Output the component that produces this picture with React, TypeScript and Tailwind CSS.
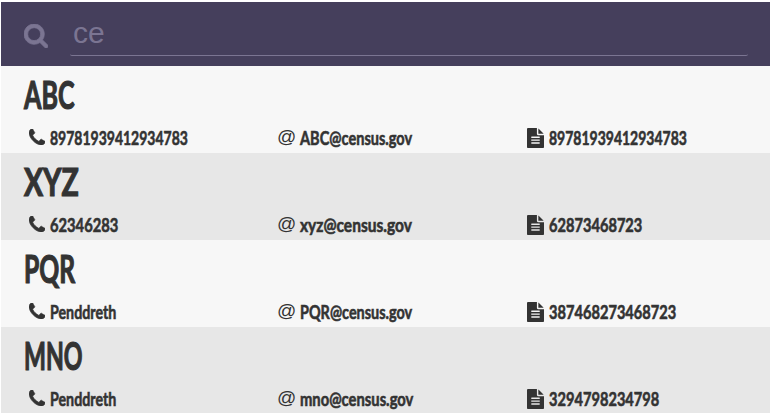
const hand =
  "font-['Lato',sans-serif] font-bold text-[#333333] inline-block origin-left whitespace-nowrap";

type Field = { text: string; scale: string };
type Contact = { name: Field; phone: Field; email: Field; doc: Field };

const contacts: Contact[] = [
  {
    name: { text: "ABC", scale: "scale-x-[0.66]" },
    phone: { text: "89781939412934783", scale: "scale-x-[0.736]" },
    email: { text: "ABC@census.gov", scale: "scale-x-[0.765]" },
    doc: { text: "89781939412934783", scale: "scale-x-[0.736]" },
  },
  {
    name: { text: "XYZ", scale: "scale-x-[0.75]" },
    phone: { text: "62346283", scale: "scale-x-[0.775]" },
    email: { text: "xyz@census.gov", scale: "scale-x-[0.817]" },
    doc: { text: "62873468723", scale: "scale-x-[0.77]" },
  },
  {
    name: { text: "PQR", scale: "scale-x-[0.65]" },
    phone: { text: "Penddreth", scale: "scale-x-[0.75]" },
    email: { text: "PQR@census.gov", scale: "scale-x-[0.76]" },
    doc: { text: "387468273468723", scale: "scale-x-[0.77]" },
  },
  {
    name: { text: "MNO", scale: "scale-x-[0.61]" },
    phone: { text: "Penddreth", scale: "scale-x-[0.75]" },
    email: { text: "mno@census.gov", scale: "scale-x-[0.777]" },
    doc: { text: "3294798234798", scale: "scale-x-[0.77]" },
  },
];

function SearchIcon() {
  return (
    <svg viewBox="64 128 1664 1664" fill="currentColor" stroke="currentColor" strokeWidth="50" className="mt-[22px] size-[24px]">
      <path d="M1216 832q0-185-131.5-316.5t-316.5-131.5-316.5 131.5-131.5 316.5 131.5 316.5 316.5 131.5 316.5-131.5 131.5-316.5zm512 832q0 52-38 90t-90 38q-54 0-90-38l-343-342q-179 124-399 124-143 0-273.5-55.5t-225-150-150-225-55.5-273.5 55.5-273.5 150-225 225-150 273.5-55.5 273.5 55.5 225 150 150 225 55.5 273.5q0 220-124 399l343 343q37 37 37 90z" />
    </svg>
  );
}

function PhoneIcon() {
  return (
    <svg viewBox="192 128 1408 1408" fill="currentColor" stroke="currentColor" strokeWidth="60" className="-mt-[2px] mr-[5px] size-[16px]">
      <path d="M1600 1240q0 27-10 70.5t-21 68.5q-21 50-122 106-94 51-186 51-27 0-53-3.5t-57.5-12.5-47-14.5-55.5-20.5-49-18q-98-35-175-83-127-79-264-216t-216-264q-48-77-83-175-3-9-18-49t-20.5-55.5-14.5-47-12.5-57.5-3.5-53q0-92 51-186 56-101 106-122 25-11 68.5-21t70.5-10q14 0 21 3 18 6 53 76 11 19 30 54t35 63.5 31 53.5q3 4 17.5 25t21.5 35.5 7 28.5q0 20-28.5 50t-62 55-62 53-28.5 46q0 9 5 22.5t8.5 20.5 14 24 11.5 19q76 137 174 235t235 174q2 1 19 11.5t24 14 20.5 8.5 22.5 5q18 0 46-28.5t53-62 55-62 50-28.5q14 0 28.5 7t35.5 21.5 25 17.5q25 15 53.5 31t63.5 35 54 30q70 35 76 53 3 7 3 21z" />
    </svg>
  );
}

function FileIcon() {
  return (
    <svg viewBox="128 0 1536 1792" fill="currentColor" preserveAspectRatio="none" className="mr-[5px] h-[20px] w-[17px]">
      <path d="M1596 476q14 14 28 36h-472v-472q22 14 36 28zm-476 164h544v1056q0 40-28 68t-68 28h-1344q-40 0-68-28t-28-68v-1600q0-40 28-68t68-28h800v544q0 40 28 68t68 28zm160 736v-64q0-14-9-23t-23-9h-704q-14 0-23 9t-9 23v64q0 14 9 23t23 9h704q14 0 23-9t9-23zm0-256v-64q0-14-9-23t-23-9h-704q-14 0-23 9t-9 23v64q0 14 9 23t23 9h704q14 0 23-9t9-23zm0-256v-64q0-14-9-23t-23-9h-704q-14 0-23 9t-9 23v64q0 14 9 23t23 9h704q14 0 23-9t9-23z" />
    </svg>
  );
}

function Value({ field }: { field: Field }) {
  return (
    <span className={`${hand} text-[19px] leading-6 [-webkit-text-stroke:0.6px_#333333] ${field.scale}`}>
      {field.text}
    </span>
  );
}

function Row({ contact }: { contact: Contact }) {
  return (
    <li className="h-[87px] pl-[23px] odd:bg-[#f7f7f7] even:bg-[#e7e7e7]">
      <h2 className="h-[60px] pt-[3px] leading-[50px]">
        <span className={`${hand} text-[38px] [-webkit-text-stroke:1.2px_#333333] ${contact.name.scale}`}>
          {contact.name.text}
        </span>
      </h2>
      <div className="grid h-6 grid-cols-[249px_249px_1fr] text-[#333333]">
        <div className="flex items-center pl-[5px]">
          <PhoneIcon />
          <Value field={contact.phone} />
        </div>
        <div className="flex items-center pl-[4px]">
          <span className="-mt-[2px] mr-[4px] w-[19px] font-['Liberation_Sans',sans-serif] text-[19px] leading-6">@</span>
          <Value field={contact.email} />
        </div>
        <div className="flex items-center pl-[5px]">
          <FileIcon />
          <Value field={contact.doc} />
        </div>
      </div>
    </li>
  );
}

export default function App() {
  return (
    <main className="h-[413px] overflow-hidden bg-white pt-[2px] pl-px">
      <header className="flex h-16 bg-[#453f5c] pr-[22px] pl-[23px] text-[#7b7592]">
        <SearchIcon />
        <div className="ml-[22px] h-[54px] flex-1 rounded-[2px] border-b border-[#7b7592] pl-[3px] font-['Liberation_Sans',sans-serif] text-[30px] leading-[62px]">
          ce
        </div>
      </header>
      <ul>
        {contacts.map((contact) => (
          <Row key={contact.name.text} contact={contact} />
        ))}
      </ul>
    </main>
  );
}
